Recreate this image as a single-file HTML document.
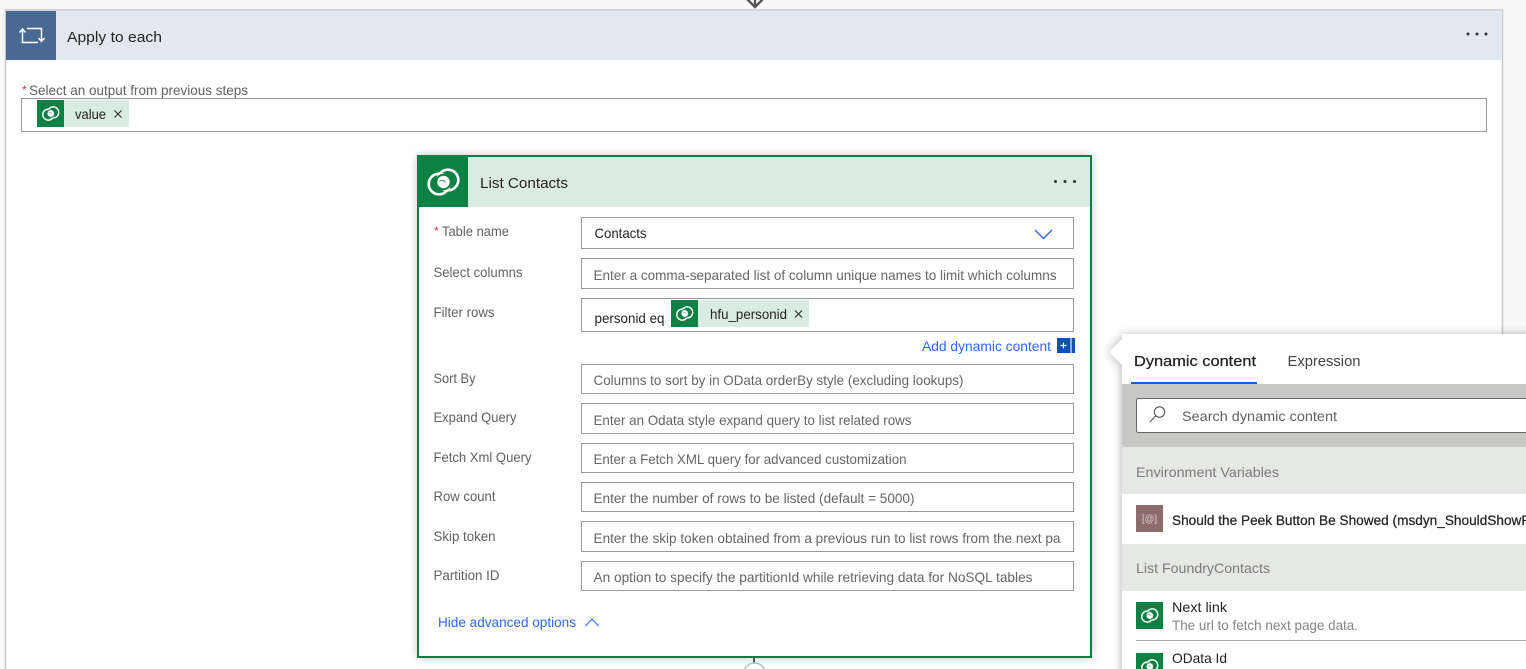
<!DOCTYPE html>
<html lang="en"><head><meta charset="utf-8"><title>Apply to each</title>
<style>
html,body{margin:0;padding:0;width:1526px;height:669px;overflow:hidden;background:#f8f8f8}
svg{display:block}
text{font-family:"Liberation Sans",sans-serif;font-size:14px;fill:#605e5c}
.d{fill:#252423}
.l{fill:#5f6164}
.p{fill:#666}
.b{fill:#2f68f5}
.box{fill:#fff;stroke:#999;stroke-width:1}
.s{stroke:#252423;stroke-width:.25px}
</style></head><body>
<svg width="1526" height="669" viewBox="0 0 1526 669" xmlns="http://www.w3.org/2000/svg">
<defs>
<symbol id="dv" viewBox="0 0 50 50">
<circle cx="21" cy="27" r="10.300" fill="none" stroke="#fff" stroke-width="2.600"/>
<circle cx="30" cy="23" r="10.300" fill="none" stroke="#fff" stroke-width="2.600"/>
<circle cx="25.500" cy="25" r="8.200" fill="#0d8044"/>
<circle cx="25.500" cy="25" r="6.200" fill="#fff"/>
<path d="M21.500 24.500c1.800-2 5-1.500 5.800 1.200" fill="none" stroke="#0d8044" stroke-width=".9"/>
</symbol>
<filter id="sh" x="-10%" y="-10%" width="120%" height="120%"><feGaussianBlur stdDeviation="5"/></filter>
</defs>

<rect x="0" y="0" width="1526" height="669" fill="#f8f8f8"/>

<!-- outer apply-to-each card -->
<rect x="5.500" y="10" width="1497" height="670" fill="#fff" stroke="#c8c8c8" stroke-width="1.500"/>
<rect x="6" y="11" width="1496" height="49" fill="#e3e7ef"/>
<rect x="6" y="11" width="50" height="49" fill="#486991"/>
<path d="M22.500 29v13.500H38M25.500 32.500L22.500 29l-3 3.500M41.500 41.500V28.500H27M38.500 38l3 3.500 3-3.500" fill="none" stroke="#fff" stroke-width="1.500"/>
<text x="67" y="42" class="d" textLength="95" lengthAdjust="spacingAndGlyphs" style="font-size:15px">Apply to each</text>
<circle cx="1468" cy="34" r="1.500" fill="#333"/><circle cx="1477" cy="34" r="1.500" fill="#333"/><circle cx="1486" cy="34" r="1.500" fill="#333"/>

<!-- top connector arrow -->
<path d="M747 -1l8 8 8-8" fill="none" stroke="#555" stroke-width="2.400"/>
<rect x="753.800" y="0" width="2.400" height="7" fill="#555"/>

<text x="22" y="94" style="font-size:12px;fill:#d13438">*</text>
<text x="29" y="95" textLength="219" lengthAdjust="spacingAndGlyphs" class="l">Select an output from previous steps</text>
<rect x="21.500" y="98.500" width="1465" height="33" class="box"/>
<rect x="37" y="100" width="92" height="27" fill="#d9ebe2"/>
<rect x="37" y="100" width="27" height="27" fill="#0d8044"/>
<use href="#dv" x="37" y="100" width="27" height="27"/>
<text x="75" y="119" textLength="31" lengthAdjust="spacingAndGlyphs" class="d">value</text>
<path d="M114.500 110.500l7 7m0-7l-7 7" stroke="#333" stroke-width="1.200" fill="none"/>

<!-- List Contacts card -->
<rect x="418" y="156" width="673" height="501" fill="#000" opacity=".28" filter="url(#sh)"/>
<rect x="418" y="156" width="673" height="501" fill="#fff" stroke="#0d8044" stroke-width="2"/>
<rect x="419" y="157" width="671" height="50" fill="#dbebe3"/>
<rect x="418" y="157" width="50" height="50" fill="#0d8044"/>
<use href="#dv" x="418" y="157" width="50" height="50"/>
<text x="480" y="188" textLength="88" lengthAdjust="spacingAndGlyphs" class="d" style="font-size:15px">List Contacts</text>
<circle cx="1055.500" cy="181.500" r="1.500" fill="#333"/><circle cx="1065" cy="181.500" r="1.500" fill="#333"/><circle cx="1074.500" cy="181.500" r="1.500" fill="#333"/>

<text x="434" y="235" style="font-size:12px;fill:#d13438">*</text>
<text x="442" y="236" textLength="67" lengthAdjust="spacingAndGlyphs" class="l">Table name</text>
<rect x="581.500" y="217.500" width="492" height="31" class="box"/>
<text x="594.500" y="238" textLength="52" lengthAdjust="spacingAndGlyphs" class="d">Contacts</text>
<path d="M1035 230l8.500 8.500 8.500-8.500" fill="none" stroke="#2f68f5" stroke-width="1.400"/>

<text x="433.500" y="277" textLength="89" lengthAdjust="spacingAndGlyphs" class="l">Select columns</text>
<rect x="581.500" y="258.500" width="492" height="30" class="box"/>
<text x="593.500" y="280" textLength="463" lengthAdjust="spacingAndGlyphs" class="p">Enter a comma-separated list of column unique names to limit which columns</text>

<text x="433.500" y="317" textLength="61" lengthAdjust="spacingAndGlyphs" class="l">Filter rows</text>
<rect x="581.500" y="298.500" width="492" height="33" class="box"/>
<text x="594.500" y="323" textLength="70" lengthAdjust="spacingAndGlyphs" class="d">personid eq</text>
<rect x="671" y="300" width="138" height="27" fill="#d9ebe2"/>
<rect x="671" y="300" width="27" height="27" fill="#0d8044"/>
<use href="#dv" x="671" y="300" width="27" height="27"/>
<text x="710" y="319" textLength="77" lengthAdjust="spacingAndGlyphs" class="d">hfu_personid</text>
<path d="M795 310.500l7 7m0-7l-7 7" stroke="#333" stroke-width="1.200" fill="none"/>

<text x="922" y="351" textLength="129" lengthAdjust="spacingAndGlyphs" class="b">Add dynamic content</text>
<rect x="1057" y="338" width="13" height="15" fill="#0a52ad"/>
<rect x="1070" y="338" width="2" height="15" fill="#8fb0dc"/>
<rect x="1072" y="338" width="3" height="15" fill="#0a52ad"/>
<path d="M1060.500 345.500h6m-3-3v6" stroke="#fff" stroke-width="1.200" fill="none"/>

<text x="433.500" y="383" textLength="42" lengthAdjust="spacingAndGlyphs" class="l">Sort By</text>
<rect x="581.500" y="364.500" width="492" height="29" class="box"/>
<text x="593.500" y="385" textLength="370" lengthAdjust="spacingAndGlyphs" class="p">Columns to sort by in OData orderBy style (excluding lookups)</text>

<text x="433.500" y="422" textLength="83" lengthAdjust="spacingAndGlyphs" class="l">Expand Query</text>
<rect x="581.500" y="403.500" width="492" height="30" class="box"/>
<text x="593.500" y="425" textLength="318" lengthAdjust="spacingAndGlyphs" class="p">Enter an Odata style expand query to list related rows</text>

<text x="433.500" y="462" textLength="98" lengthAdjust="spacingAndGlyphs" class="l">Fetch Xml Query</text>
<rect x="581.500" y="443.500" width="492" height="29" class="box"/>
<text x="593.500" y="464" textLength="313" lengthAdjust="spacingAndGlyphs" class="p">Enter a Fetch XML query for advanced customization</text>

<text x="433.500" y="501" textLength="62" lengthAdjust="spacingAndGlyphs" class="l">Row count</text>
<rect x="581.500" y="482.500" width="492" height="29" class="box"/>
<text x="593.500" y="503" textLength="321" lengthAdjust="spacingAndGlyphs" class="p">Enter the number of rows to be listed (default = 5000)</text>

<text x="433.500" y="541" textLength="62" lengthAdjust="spacingAndGlyphs" class="l">Skip token</text>
<rect x="581.500" y="521.500" width="492" height="30" class="box"/>
<text x="593.500" y="543" textLength="467" lengthAdjust="spacingAndGlyphs" class="p">Enter the skip token obtained from a previous run to list rows from the next pa</text>

<text x="433.500" y="580" textLength="66" lengthAdjust="spacingAndGlyphs" class="l">Partition ID</text>
<rect x="581.500" y="561.500" width="492" height="29" class="box"/>
<text x="593.500" y="582" textLength="439" lengthAdjust="spacingAndGlyphs" class="p">An option to specify the partitionId while retrieving data for NoSQL tables</text>

<text x="438" y="627" textLength="138" lengthAdjust="spacingAndGlyphs" class="b">Hide advanced options</text>
<path d="M585.500 626l6.500-7 6.500 7" fill="none" stroke="#2f68f5" stroke-width="1.100"/>

<!-- bottom connector -->
<rect x="753" y="658" width="2" height="5" fill="#555"/>
<circle cx="754.500" cy="674" r="11" fill="#fff" stroke="#bbb" stroke-width="1.500"/>

<!-- dynamic content panel -->
<path d="M1122 335H1540V690H1122V365L1109 352 1122 339z" fill="#000" opacity=".32" filter="url(#sh)"/>
<path d="M1122 334H1526V669H1122V365L1109 352 1122 339z" fill="#fff"/>
<text x="1134" y="366" textLength="122" lengthAdjust="spacingAndGlyphs" class="d s" style="font-size:15px">Dynamic content</text>
<text x="1287.500" y="366" textLength="73" lengthAdjust="spacingAndGlyphs" style="font-size:15px;fill:#444">Expression</text>
<rect x="1131" y="382" width="126" height="2" fill="#0f62e6"/>
<rect x="1122" y="384" width="404" height="63" fill="#c8c9c6"/>
<rect x="1136.500" y="398.500" width="400" height="34" rx="2" fill="#fff" stroke="#666" stroke-width="1"/>
<circle cx="1159.500" cy="412" r="5.200" fill="none" stroke="#555" stroke-width="1.100"/>
<path d="M1155.500 416l-5.500 6" fill="none" stroke="#555" stroke-width="1.100"/>
<text x="1182" y="421" textLength="155" lengthAdjust="spacingAndGlyphs" class="l">Search dynamic content</text>

<rect x="1122" y="447" width="404" height="47" fill="#e6e8e5"/>
<text x="1136" y="477" textLength="143" lengthAdjust="spacingAndGlyphs" style="fill:#7a7a7a">Environment Variables</text>
<rect x="1136" y="505" width="27" height="27" fill="#8c6b6b"/>
<text x="1142" y="522" textLength="15" lengthAdjust="spacingAndGlyphs" style="font-size:10px;fill:#dcd2d2">[@]</text>
<text x="1172" y="525" textLength="385" lengthAdjust="spacingAndGlyphs" class="d s" style="font-size:13.500px">Should the Peek Button Be Showed (msdyn_ShouldShowPeek)</text>

<rect x="1122" y="544" width="404" height="47" fill="#e6e8e5"/>
<text x="1136" y="573" textLength="134" lengthAdjust="spacingAndGlyphs" style="fill:#7a7a7a">List FoundryContacts</text>

<rect x="1136" y="602" width="27" height="27" fill="#0d8044"/>
<use href="#dv" x="1136" y="602" width="27" height="27"/>
<text x="1172" y="612" textLength="55" lengthAdjust="spacingAndGlyphs" class="d">Next link</text>
<text x="1172" y="630" textLength="186" lengthAdjust="spacingAndGlyphs" style="fill:#858585">The url to fetch next page data.</text>
<rect x="1136" y="640" width="390" height="1" fill="#aaa"/>
<rect x="1136" y="653" width="27" height="27" fill="#0d8044"/>
<use href="#dv" x="1136" y="653" width="27" height="27"/>
<text x="1172" y="663" textLength="55" lengthAdjust="spacingAndGlyphs" class="d">OData Id</text>
</svg>
</body></html>
